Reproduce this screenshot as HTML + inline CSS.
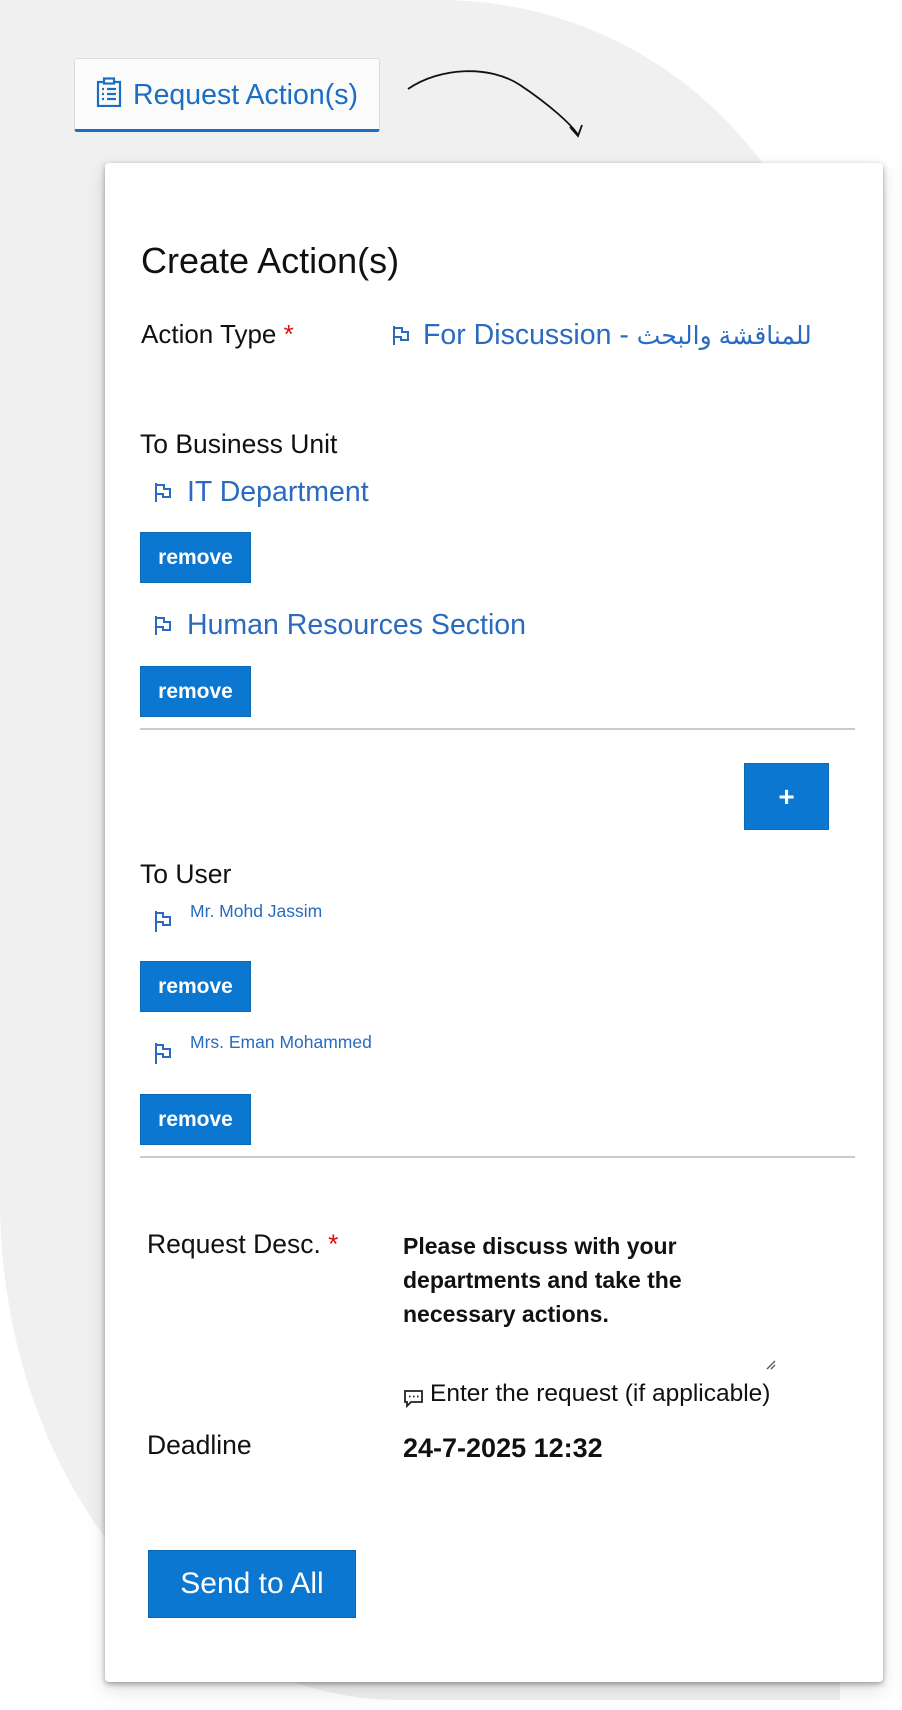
<!DOCTYPE html>
<html><head><meta charset="utf-8">
<style>
*{margin:0;padding:0;box-sizing:border-box}
body{width:902px;height:1710px;background:#fff;position:relative;overflow:hidden;font-family:"Liberation Sans",Arial,sans-serif}
.a{position:absolute;white-space:nowrap}
.blob{position:absolute;left:0;top:0;width:840px;height:1700px;background:#f0f0f0;border-radius:0 400px 0 400px / 0 400px 0 500px}
.card{position:absolute;left:105px;top:163px;width:778px;height:1519px;background:#fff;border-radius:4px;box-shadow:0 2px 6px rgba(0,0,0,.35),0 8px 20px rgba(0,0,0,.12)}
.blue{color:#2a6bbf}
.btn{position:absolute;background:#0b77d0;color:#fff;font-weight:bold;font-size:21px;display:flex;align-items:center;justify-content:center;border:1px solid #0a6ab8}
.hr{position:absolute;left:140px;width:715px;height:2px;background:#cbcbcb}
.lbl{font-size:26.5px;color:#111;line-height:26.5px}
</style></head><body>
<div class="blob"></div>

<div class="a" style="left:74px;top:58px;width:306px;height:74px;background:#fbfbfb;border:1px solid #dcdcdc;border-bottom:3px solid #1a6fc4;border-radius:3px"></div>
<svg class="a" style="left:96px;top:77px" width="26" height="30" viewBox="0 0 26 30" fill="none" stroke="#1a6fc4" stroke-width="2.2"><rect x="2" y="5" width="22" height="24"/><rect x="8" y="1.5" width="10" height="5" fill="#fff"/><path d="M6 12h2M11 12h9M6 17h2M11 17h9M6 22h2M11 22h9"/></svg>
<div class="a" style="left:133px;top:81px;font-size:28.5px;line-height:28.5px;color:#1a6fc4">Request Action(s)</div>
<svg class="a" style="left:400px;top:65px" width="190" height="80" viewBox="0 0 190 80" fill="none" stroke="#111" stroke-width="1.8"><path d="M8 24C40 2 90 0 120 20C150 40 172 60 178 70"/><path d="M170 62L178 71L182 60"/></svg>

<div class="card"></div>
<div class="a" style="left:141px;top:243px;font-size:36px;line-height:36px;color:#111">Create Action(s)</div>
<div class="a" style="left:141px;top:321px;font-size:26px;line-height:26px;color:#111">Action Type <span style="color:#e01010">*</span></div>
<svg class="a" style="left:391px;top:325px" width="20" height="20" viewBox="0 0 20 20" fill="none" stroke="#2a6bbf" stroke-width="2"><path d="M3 1v19M3 3h8v4h6v8H10v-3H3"/></svg>
<div class="a blue" style="left:423px;top:321px;font-size:28.5px;line-height:28.5px">For Discussion - <span style="font-size:25px">للمناقشة والبحث</span></div>

<div class="a lbl" style="left:140px;top:431px">To Business Unit</div>
<svg class="a" style="left:153px;top:482px" width="20" height="20" viewBox="0 0 20 20" fill="none" stroke="#2a6bbf" stroke-width="2"><path d="M3 1v19M3 3h8v4h6v8H10v-3H3"/></svg>
<div class="a blue" style="left:187px;top:478px;font-size:28.5px;line-height:28.5px">IT Department</div>
<div class="btn" style="left:140px;top:532px;width:111px;height:51px">remove</div>
<svg class="a" style="left:153px;top:615px" width="20" height="20" viewBox="0 0 20 20" fill="none" stroke="#2a6bbf" stroke-width="2"><path d="M3 1v19M3 3h8v4h6v8H10v-3H3"/></svg>
<div class="a blue" style="left:187px;top:611px;font-size:28.5px;line-height:28.5px">Human Resources Section</div>
<div class="btn" style="left:140px;top:666px;width:111px;height:51px">remove</div>
<div class="hr" style="top:728px"></div>

<div class="btn" style="left:744px;top:763px;width:85px;height:67px;font-size:28px">+</div>
<div class="a lbl" style="left:140px;top:861px">To User</div>
<svg class="a" style="left:153px;top:910px" width="20" height="22" viewBox="0 0 20 22" fill="none" stroke="#2a6bbf" stroke-width="2"><path d="M3 1v21M3 3h7v4h7v8H10v-3H3"/></svg>
<div class="a blue" style="left:190px;top:903px;font-size:17.5px;line-height:17.5px">Mr. Mohd Jassim</div>
<div class="btn" style="left:140px;top:961px;width:111px;height:51px">remove</div>
<svg class="a" style="left:153px;top:1042px" width="20" height="22" viewBox="0 0 20 22" fill="none" stroke="#2a6bbf" stroke-width="2"><path d="M3 1v21M3 3h7v4h7v8H10v-3H3"/></svg>
<div class="a blue" style="left:190px;top:1034px;font-size:17.5px;line-height:17.5px">Mrs. Eman Mohammed</div>
<div class="btn" style="left:140px;top:1094px;width:111px;height:51px">remove</div>
<div class="hr" style="top:1156px"></div>

<div class="a lbl" style="left:147px;top:1231px">Request Desc. <span style="color:#e01010">*</span></div>
<div class="a" style="left:403px;top:1229px;font-size:23px;line-height:34px;font-weight:bold;color:#111">Please discuss with your<br>departments and take the<br>necessary actions.</div>
<svg class="a" style="left:765px;top:1358px" width="12" height="12" viewBox="0 0 12 12" stroke="#555" stroke-width="1.3"><path d="M2 11L10 3M6 11L10 7"/></svg>
<svg class="a" style="left:403px;top:1389px" width="21" height="19" viewBox="0 0 21 19" fill="none" stroke="#222" stroke-width="1.8"><path d="M2 2h17v11H8l-4 4v-4H2z"/><path d="M6 7.5h1.5M10 7.5h1.5M14 7.5h1.5"/></svg>
<div class="a" style="left:430px;top:1382px;font-size:24.5px;line-height:24.5px;color:#111">Enter the request (if applicable)</div>
<div class="a lbl" style="left:147px;top:1432px">Deadline</div>
<div class="a" style="left:403px;top:1435px;font-size:27px;line-height:27px;font-weight:bold;color:#111">24-7-2025 12:32</div>
<div class="btn" style="left:148px;top:1550px;width:208px;height:68px;font-size:30px;font-weight:normal">Send to All</div>
</body></html>
